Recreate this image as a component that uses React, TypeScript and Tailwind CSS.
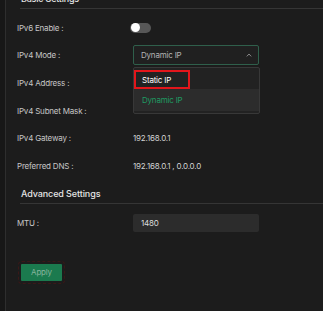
import { useState } from "react";

const rows = [
  { label: "IPv6 Enable :", kind: "toggle" },
  { label: "IPv4 Mode :", kind: "select" },
  { label: "IPv4 Address :", kind: "empty" },
  { label: "IPv4 Subnet Mask :", kind: "empty" },
  { label: "IPv4 Gateway :", kind: "text", value: "192.168.0.1" },
  { label: "Preferred DNS :", kind: "text", value: "192.168.0.1 , 0.0.0.0" },
];

function Toggle({ on }: { on: boolean }) {
  return (
    <div className={`ml-[-3px] flex h-[10px] w-[21px] items-center rounded-full px-[1px] ${on ? "bg-[#1b7a4e]" : "bg-[#575757]"}`}>
      <div className={`h-[9px] w-[9px] rounded-full bg-white ${on ? "ml-auto" : ""}`} />
    </div>
  );
}

function ModeSelect() {
  return (
    <div className="relative w-[126px]">
      <div className="flex h-[20px] items-center justify-between rounded-[2px] border border-[#2f5f4b] bg-[#202020] pl-[7px] pr-[6px] text-[#b4b4b4]">
        <span>Dynamic IP</span>
        <svg width="6" height="4" viewBox="0 0 6 4" fill="none">
          <path d="M0.8 3.4 L3 1 L5.2 3.4" stroke="#8a8a8a" strokeWidth="1" />
        </svg>
      </div>
      {/* open menu */}
      <div className="absolute left-0 top-[22px] z-10 w-[127px] rounded-[2px] border border-[#383838] bg-[#222222] pb-[2px]">
        <div className="flex h-[21px] items-end">
          <div className="flex h-[19px] w-[56px] items-center border-2 border-[#e3161b] pl-[6px] text-white">
            Static IP
          </div>
        </div>
        <div className="flex h-[22px] items-center bg-[#2c2c2c] pl-[8px] text-[#1f9b62]">Dynamic IP</div>
      </div>
    </div>
  );
}

export default function App() {
  const [ipv6] = useState(false);

  return (
    <div className="flex h-[311px] w-[323px] overflow-hidden bg-[#1c1c1c] text-[8px] tracking-[-0.2px] text-[#c6c6c6]" style={{ fontFamily: "Inter, 'Liberation Sans', sans-serif" }}>
      <div className="w-[5px] shrink-0 bg-[#171717]" />
      <div className="w-[1px] shrink-0 bg-[#2e2e2e]" />
      <div className="flex-1">
        {/* basic settings heading, scrolled mostly out of view */}
        <div className="ml-[15px] mt-[-7px] flex h-[15px] items-start text-[9px] font-medium leading-[11px] text-[#e4e4e4]">Basic Settings</div>
        <div className="ml-[14px] h-[1px] bg-[#353535]" />

        <div className="mt-[5px] flex flex-col">
          {rows.map((r) => (
            <div key={r.label} className="flex h-[27.6px] items-center pl-[11px]">
              <div className="w-[116px]">{r.label}</div>
              {r.kind === "toggle" && <Toggle on={ipv6} />}
              {r.kind === "select" && <ModeSelect />}
              {r.kind === "text" && <div className="text-[#d2d2d2]">{r.value}</div>}
            </div>
          ))}
        </div>

        <div className="ml-[15px] mt-[8px] flex h-[12px] items-center text-[9px] font-medium tracking-[-0.1px] text-[#e4e4e4]">Advanced Settings</div>
        <div className="ml-[14px] mt-[3px] h-[1px] bg-[#353535]" />

        <div className="mt-[10px] flex h-[18px] items-center pl-[11px]">
          <div className="w-[116px]">MTU :</div>
          <div className="flex h-[18px] w-[126px] items-center rounded-[2px] bg-[#2c2c2c] pl-[8px] text-[#dcdcdc]">1480</div>
        </div>

        <div className="ml-[15px] mt-[32px]">
          <button type="button" className="h-[17px] w-[41px] rounded-[1px] bg-[#1b7a4e] text-[8px] text-[#86b49c] outline-1 outline-offset-2 outline-dashed outline-[#3a1818]">
            Apply
          </button>
        </div>
      </div>
    </div>
  );
}
